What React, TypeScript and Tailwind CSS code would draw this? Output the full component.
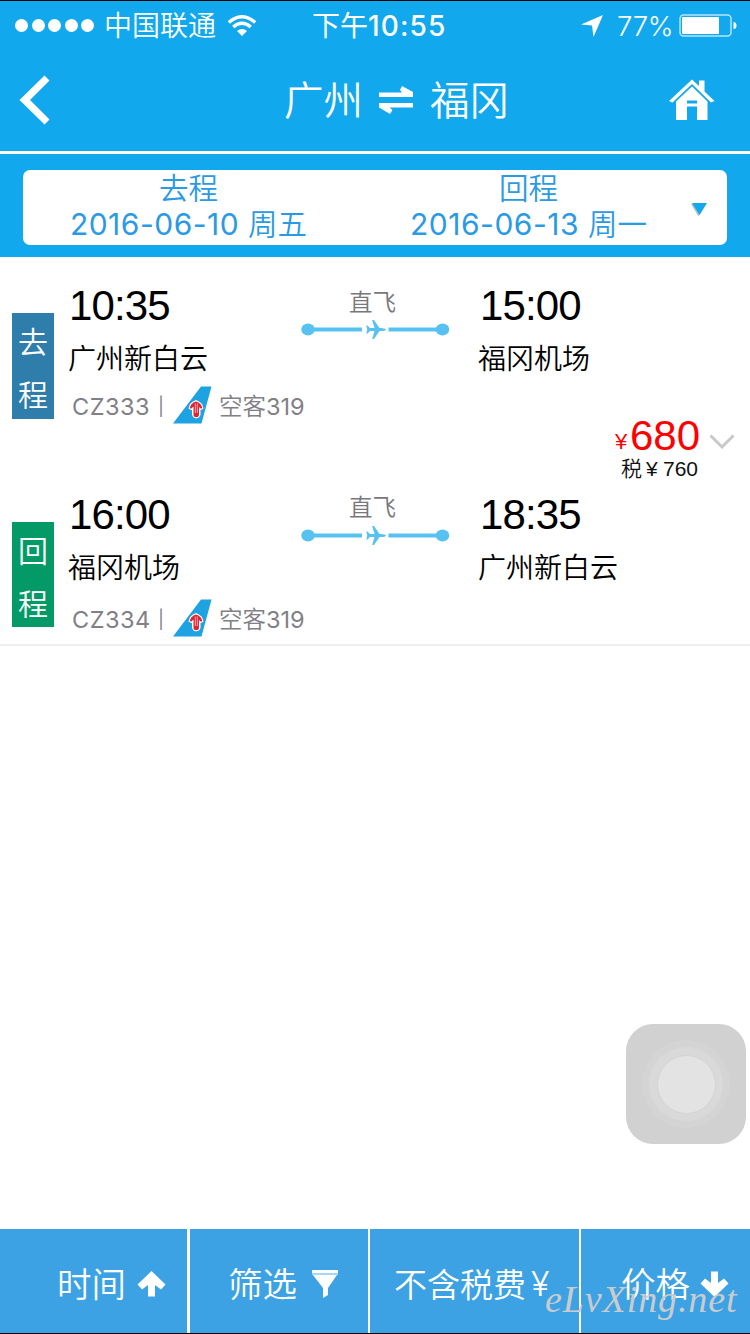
import React from 'react';

const legs = [
  {
    tag: ['去', '程'],
    tagClass: 'bg-[#2f7dab] mt-[56px] h-[106px]',
    depTime: '10:35',
    depPort: '广州新白云',
    arrTime: '15:00',
    arrPort: '福冈机场',
    flight: 'CZ333',
    plane: ['空客', '319'],
    rowClass: 'h-[209px]',
    routeClass: 'pt-[32px]',
    arrClass: 'pt-[28px]',
    flightClass: 'mt-[4px]',
    lineClass: 'mt-[0px]',
  },
  {
    tag: ['回', '程'],
    tagClass: 'bg-[#039a67] mt-[56px] h-[105px]',
    depTime: '16:00',
    depPort: '福冈机场',
    arrTime: '18:35',
    arrPort: '广州新白云',
    flight: 'CZ334',
    plane: ['空客', '319'],
    rowClass: 'h-[178px]',
    routeClass: 'pt-[28px]',
    arrClass: 'pt-[28px]',
    flightClass: 'mt-[8px]',
    lineClass: 'mt-[1px]',
  },
];

export default function App() {
  return (
    <div className="relative flex h-[1334px] w-[750px] flex-col overflow-hidden border-y border-black bg-white font-['Inter','Noto_Sans_CJK_SC',sans-serif]">
      <StatusBar />
      <Header />
      <DateBar />

      {/* Flight card */}
      <main className="flex h-[389px] shrink-0 border-b-2 border-[#efeff2]">
        <div className="w-[600px] shrink-0">
          {legs.map((leg) => (
            <Leg key={leg.flight} leg={leg} />
          ))}
        </div>
        <div className="w-[150px] pt-[158px] font-['Liberation_Sans','Noto_Sans_CJK_SC',sans-serif]">
          <div className="flex h-[42px] items-center">
            <span className="ml-[15px] mt-[11px] w-[15px] text-[22px] leading-none text-[#fe0000]">¥</span>
            <span className="w-[71px] text-[42px] leading-[42px] text-[#fe0000]">680</span>
            <svg className="ml-[8px] mt-[11px]" width="26" height="16" viewBox="0 0 26 16" fill="none" stroke="#c8c8c8" strokeWidth="3">
              <path d="M1.5 1.5 13 13 24.5 1.5" />
            </svg>
          </div>
          <div className="ml-[21px] flex h-[24px] items-center text-[21px] leading-[24px] text-[#111]">
            <span className="w-[25px] font-[350]">税</span>
            <span className="w-[17px]">¥</span>
            <span>760</span>
          </div>
        </div>
      </main>

      <div className="flex-1" />

      <AssistiveTouch />
      <BottomBar />

      <div className="absolute left-[545px] top-[1273px] whitespace-nowrap font-['Liberation_Serif',serif] text-[38px] italic leading-[50px] tracking-[0.9px] text-[#c9cbcd]">
        eLvXing.net
      </div>
    </div>
  );
}

function StatusBar() {
  return (
    <div className="flex h-[49px] shrink-0 items-center bg-[#12a8ed] text-white">
      <div className="ml-[15px] flex w-[89px] gap-[3.5px]">
        {[0, 1, 2, 3, 4].map((i) => (
          <div key={i} className="size-[13px] rounded-full bg-white" />
        ))}
      </div>
      <span className="mt-px w-[123px] text-[28px] font-[350] leading-[40px]">中国联通</span>
      <svg width="30" height="22" viewBox="0 0 30 22" fill="none" stroke="white" strokeWidth="3.4">
        <path d="M1.8 7.5Q15-4 28.2 7.5" />
        <path d="M6.2 12Q15 4.5 23.8 12" />
        <path d="M15 21 10 16Q15 12 20 16Z" fill="white" stroke="none" />
      </svg>
      <span className="ml-[55px] mt-px w-[140px] whitespace-nowrap text-[28px] leading-[40px]">
        下午<span className="text-[28px] font-medium tracking-[1.1px]">10:55</span>
      </span>
      <svg className="ml-[129px]" width="22" height="22" viewBox="0 0 22 22" fill="white">
        <path d="M22 0 12.5 22 11 10.5 0 9.5Z" />
      </svg>
      <span className="ml-[14px] mt-px w-[62px] whitespace-nowrap text-[27.5px] font-[350] leading-[40px] tracking-[-0.3px]">77%</span>
      <svg width="58" height="24" viewBox="0 0 58 24" fill="none">
        <rect x="1" y="1" width="51" height="21" rx="3.5" stroke="#b9e4fa" strokeWidth="1.5" />
        <rect x="3" y="3" width="37" height="17" rx="1" fill="white" />
        <path d="M54.5 8Q57.5 8 57.5 11.5T54.5 15Z" fill="white" />
      </svg>
    </div>
  );
}

function Header() {
  return (
    <header className="flex h-[104px] shrink-0 items-center border-b-3 border-white bg-[#12a8ed] pb-[2px] text-white">
      <svg className="ml-[19px]" width="31" height="50" viewBox="0 0 31 50" fill="white">
        <path d="M25.5 .5 30.5 5.5 11 25 30.5 44.5 25.5 49.5 .5 25Z" />
      </svg>
      <h1 className="ml-[234px] flex items-center text-[39.5px] font-[350] leading-[56px]">
        <span className="mt-[3px] w-[94px]">广州</span>
        <svg width="36" height="28" viewBox="0 0 36 28" fill="white">
          <path d="M1 6.5H24L22 4 24 0 35 6V11H1Z" />
          <path d="M35 17H1V21.5L12 28 14.5 24 11.5 21.5H35Z" />
        </svg>
        <span className="ml-[16px] mt-[3px] w-[90px]">福冈</span>
      </h1>
      <svg className="ml-[149px]" width="46" height="42" viewBox="0 0 46 42" fill="white">
        <path d="M0 22 23 .5 30 7V1.5H35.5V12.5L45.5 22 42 23.5 23 5 3.5 23.5Z" />
        <path d="M7 22.5 23 7.5 38.500 22.5V41H28V27.5H18V41H7ZM18 21.5V24.5H28V21.5Z" fillRule="evenodd" />
      </svg>
    </header>
  );
}

function DateBar() {
  return (
    <div className="h-[103px] shrink-0 bg-[#12a8ed] px-[23px] pt-[16px]">
      <div className="flex h-[75px] rounded-[7px] bg-white text-[29.5px] font-[350] text-[#2b9ae4]">
        <div className="w-[331px] text-center leading-[36px]">
          <p>去程</p>
          <p className="whitespace-nowrap">
            <span className="text-[30px] font-normal tracking-[0.5px]">2016-06-10 </span>周五
          </p>
        </div>
        <div className="ml-[9px] w-[331px] text-center leading-[36px]">
          <p>回程</p>
          <p className="whitespace-nowrap">
            <span className="text-[30px] font-normal tracking-[0.5px]">2016-06-13 </span>周一
          </p>
        </div>
        <svg className="-ml-[4px] mt-[32px]" width="18" height="15" viewBox="0 0 18 15">
          <path d="M1 2H16L8.5 14.5Z" fill="#b9bfc4" />
          <path d="M2 1H17L9.5 13Z" fill="#12a8ed" />
        </svg>
      </div>
    </div>
  );
}

function Leg({ leg }: { leg: (typeof legs)[number] }) {
  return (
    <section className={`flex ${leg.rowClass}`}>
      <div className={`ml-[12px] flex w-[42px] shrink-0 flex-col items-center justify-center pt-[6px] text-[30px] font-[350] leading-[53px] text-white ${leg.tagClass}`}>
        <span>{leg.tag[0]}</span>
        <span>{leg.tag[1]}</span>
      </div>

      <div className="ml-[14px] w-[233px] shrink-0 pt-[28px] text-black">
        <p className="ml-px font-['Liberation_Sans',sans-serif] text-[42px] leading-[42px] tracking-[-0.9px]">{leg.depTime}</p>
        <p className="mt-[12px] text-[28px] font-[350] leading-[40px]">{leg.depPort}</p>
        <div className={`ml-[4px] flex h-[46px] items-center whitespace-nowrap text-[23.5px] leading-[46px] text-[#808086] ${leg.flightClass}`}>
          <span className="mt-[2px] w-[86px] shrink-0 tracking-[0.5px]">{leg.flight}</span>
          <span className="mt-[2px] w-[15px] shrink-0 text-[18px]">|</span>
          <TailLogo />
          <span className="ml-[7px] mt-[2px] shrink-0 font-[350]">
            {leg.plane[0]}<span className="font-normal">{leg.plane[1]}</span>
          </span>
        </div>
      </div>

      <div className={`w-[148px] shrink-0 ${leg.routeClass}`}>
        <p className="pr-[5px] text-center text-[23.5px] font-[350] leading-[28px] text-[#77777c]">直飞</p>
        <RouteLine className={leg.lineClass} />
      </div>

      <div className={`ml-[29px] w-[122px] whitespace-nowrap text-black ${leg.arrClass}`}>
        <p className="ml-[2px] font-['Liberation_Sans',sans-serif] text-[42px] leading-[42px] tracking-[-0.9px]">{leg.arrTime}</p>
        <p className="mt-[12px] text-[28px] font-[350] leading-[40px]">{leg.arrPort}</p>
      </div>
    </section>
  );
}

function RouteLine({ className }: { className: string }) {
  return (
    <svg className={className} width="148" height="24" viewBox="0 0 148 24" fill="#57c2f2">
      <ellipse cx="7" cy="12.5" rx="6.7" ry="6" />
      <ellipse cx="141.5" cy="12.5" rx="6.7" ry="6" />
      <rect x="10" y="10.5" width="51" height="4" />
      <rect x="87.5" y="10.5" width="50" height="4" />
      <path d="M85 12.5Q84 11 80 11H78.5L73 3H71.2L73.5 11H69L66.5 8.5H65.3L66.2 12.5 65.3 16.5H66.5L69 14H73.5L71.2 22H73L78.5 14H80Q84 14 85 12.5Z" />
    </svg>
  );
}

function TailLogo() {
  return (
    <svg className="-mt-[3px] shrink-0" width="39" height="38" viewBox="0 0 39 38">
      <path d="M28 .5H38.5L28.5 37.5H0Z" fill="#1fa2e1" />
      <path d="M20 15.5 23 14 26 15.5 29 18 30.5 22.5 28 24H27.5V29L26 31.5 23 32.5 20.5 31.5 19 29V24H18L15.5 22.5 17 18Z" fill="white" />
      <path d="M20.5 16.5 23 15.5 25.5 16.5 28 18.8 29.3 22 28 22.8 26 21H20L18 22.8 16.7 22 18 18.8Z" fill="#df2434" />
      <path d="M20.5 21H26V28.5Q26 31.3 23.2 31.3T20.5 28.5Z" fill="#df2434" />
      <path d="M22.3 17.5V27M24.3 17.5V27" stroke="white" strokeWidth=".6" />
    </svg>
  );
}

function AssistiveTouch() {
  return (
    <div className="absolute left-[626px] top-[1023px] flex size-[120px] items-center justify-center rounded-[27px] bg-[#d1d1d1]">
      <div className="flex size-[88px] items-center justify-center rounded-full bg-[#d4d4d4]">
        <div className="flex size-[74px] items-center justify-center rounded-full bg-[#d9d9d9]">
          <div className="size-[59px] rounded-full border border-[#d4d4d4] bg-[#e3e3e3]" />
        </div>
      </div>
    </div>
  );
}

function BottomBar() {
  return (
    <nav className="flex h-[104px] shrink-0 bg-white text-[34.5px] font-[350] leading-[50px] text-white">
      <div className="mr-[3px] flex w-[187px] items-center bg-[#3ca2e4] pl-[57px]">
        <span className="mt-[8px] w-[80px]">时间</span>
        <ArrowIcon className="mt-[6px]" />
      </div>
      <div className="mr-[2px] flex w-[178px] items-center bg-[#3ca2e4] pl-[38px]">
        <span className="mt-[8px] w-[84px]">筛选</span>
        <svg className="mt-[6px]" width="27" height="28" viewBox="0 0 27 28" fill="white">
          <path d="M0 0H26V3H0ZM1 5H25L16 18V25L11 28V18Z" />
          <path d="M0 3H26V5H0Z" fill="#a7d5f4" />
        </svg>
      </div>
      <div className="mr-[2px] flex w-[209px] items-center bg-[#3ca2e4] pl-[24px] text-[33px]">
        <span className="mt-[8px] w-[137px]">不含税费</span>
        <span className="mt-[6px] text-[34px]">¥</span>
      </div>
      <div className="flex w-[169px] items-center bg-[#3ca2e4] pl-[40px]">
        <span className="mt-[8px] w-[79px]">价格</span>
        <ArrowIcon className="mt-[6px] rotate-180" />
      </div>
    </nav>
  );
}

function ArrowIcon({ className }: { className: string }) {
  return (
    <svg className={className} width="29" height="26" viewBox="0 0 29 26" fill="white">
      <path d="M14.5 0 28.5 13.5 24 18.5 18 14V25.5H11V14L5 18.5 .5 13.5Z" />
    </svg>
  );
}
